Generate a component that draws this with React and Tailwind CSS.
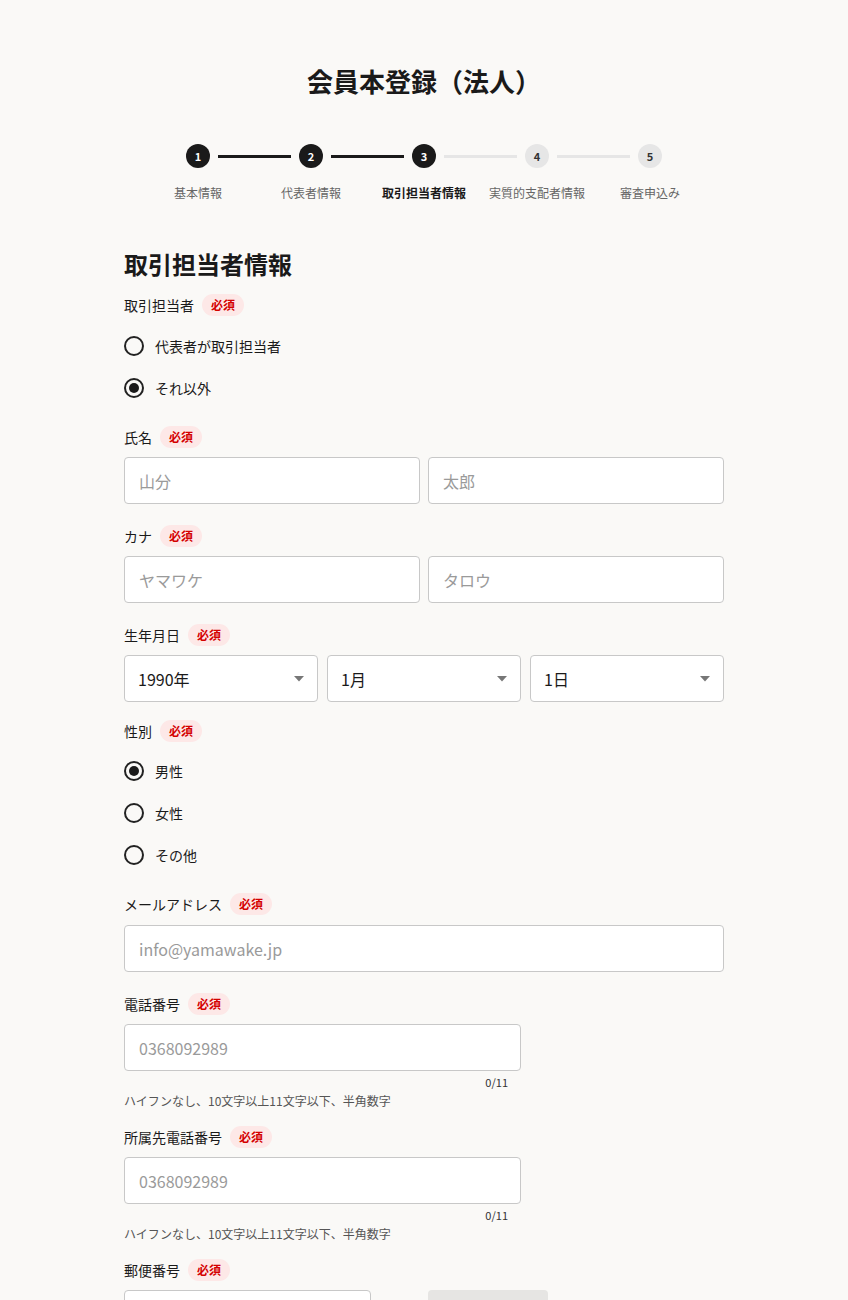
import React, { useState } from 'react';

const font = { fontFamily: '"Noto Sans CJK JP", "Noto Sans", sans-serif' };

const steps = ['基本情報', '代表者情報', '取引担当者情報', '実質的支配者情報', '審査申込み'];
const current = 3;

const Badge = () => (
  <span className="ml-2 inline-flex h-[22px] items-center rounded-full bg-[#fde8e7] px-[9px] text-[12px] font-bold text-[#d40000]">
    必須
  </span>
);

const Label = ({ children }) => (
  <div className="flex h-[22px] items-center text-[14px] text-[#1a1a1a]">
    {children}
    <Badge />
  </div>
);

const Radio = ({ checked, label, onClick }) => (
  <div onClick={onClick} className="flex h-[42px] cursor-pointer items-center">
    <span className="flex h-5 w-5 items-center justify-center rounded-full border-2 border-[#222]">
      {checked && <span className="h-[10px] w-[10px] rounded-full bg-[#1a1a1a]"></span>}
    </span>
    <span className="ml-[11px] text-[14px] text-[#1a1a1a]">{label}</span>
  </div>
);

const Input = ({ placeholder, className = '' }) => (
  <input
    type="text"
    placeholder={placeholder}
    className={`h-[47px] rounded-[4px] border border-[#c8c8c8] bg-white px-[14px] text-[16px] text-[#1a1a1a] placeholder:text-[#9a9a9a] focus:outline-none ${className}`}
  />
);

const Select = ({ value }) => (
  <div className="flex h-[47px] flex-1 items-center justify-between rounded-[4px] border border-[#c8c8c8] bg-white pl-[13px] pr-[13px] text-[16px] text-[#1a1a1a]">
    <span>{value}</span>
    <svg width="10" height="6" viewBox="0 0 10 6">
      <path d="M0 0 L10 0 L5 5.5 Z" fill="#777" />
    </svg>
  </div>
);

const App = () => {
  const [tanto, setTanto] = useState(1);
  const [gender, setGender] = useState(0);

  return (
    <div className="min-h-screen bg-[#faf9f7] pb-10" style={font}>
      {/* title */}
      <h1 className="pt-[63px] text-center text-[26px] font-bold leading-[36px] text-[#1a1a1a]">
        会員本登録（法人）
      </h1>

      {/* stepper */}
      <div className="mx-auto mt-[45px] flex w-[476px] items-center">
        {steps.map((s, i) => (
          <React.Fragment key={s}>
            <div
              className={`flex h-6 w-6 shrink-0 items-center justify-center rounded-full text-[11px] font-bold ${
                i + 1 <= current ? 'bg-[#1a1a1a] text-white' : 'bg-[#e6e6e6] text-[#333]'
              }`}
            >
              {i + 1}
            </div>
            {i < steps.length - 1 && (
              <div className={`mx-2 h-[3px] flex-1 ${i + 1 < current ? 'bg-[#1a1a1a]' : 'bg-[#e6e6e6]'}`}></div>
            )}
          </React.Fragment>
        ))}
      </div>
      <div className="mx-auto mt-4 grid w-[565px] grid-cols-5">
        {steps.map((s, i) => (
          <div
            key={s}
            className={`text-center text-[12px] leading-[18px] ${
              i + 1 === current ? 'font-bold text-[#1a1a1a]' : 'text-[#666]'
            }`}
          >
            {s}
          </div>
        ))}
      </div>

      {/* form */}
      <div className="mx-auto w-[600px]">
        <h2 className="mt-[46px] text-[24px] font-bold leading-[32px] text-[#1a1a1a]">取引担当者情報</h2>

        <div className="mt-[14px]">
          <Label>取引担当者</Label>
          <div className="mt-[9px]">
            <Radio checked={tanto === 0} label="代表者が取引担当者" onClick={() => setTanto(0)} />
            <Radio checked={tanto === 1} label="それ以外" onClick={() => setTanto(1)} />
          </div>
        </div>

        <div className="mt-[17px]">
          <Label>氏名</Label>
          <div className="mt-[9px] flex gap-2">
            <Input placeholder="山分" className="w-0 flex-1" />
            <Input placeholder="太郎" className="w-0 flex-1" />
          </div>
        </div>

        <div className="mt-[21px]">
          <Label>カナ</Label>
          <div className="mt-[9px] flex gap-2">
            <Input placeholder="ヤマワケ" className="w-0 flex-1" />
            <Input placeholder="タロウ" className="w-0 flex-1" />
          </div>
        </div>

        <div className="mt-[21px]">
          <Label>生年月日</Label>
          <div className="mt-[9px] flex gap-[9px]">
            <Select value="1990年" />
            <Select value="1月" />
            <Select value="1日" />
          </div>
        </div>

        <div className="mt-[18px]">
          <Label>性別</Label>
          <div className="mt-2">
            <Radio checked={gender === 0} label="男性" onClick={() => setGender(0)} />
            <Radio checked={gender === 1} label="女性" onClick={() => setGender(1)} />
            <Radio checked={gender === 2} label="その他" onClick={() => setGender(2)} />
          </div>
        </div>

        <div className="mt-[17px]">
          <Label>メールアドレス</Label>
          <div className="mt-[10px] flex">
            <Input placeholder="info@yamawake.jp" className="w-full" />
          </div>
        </div>

        <div className="mt-[21px]">
          <Label>電話番号</Label>
          <div className="mt-[9px] w-[397px]">
            <Input placeholder="0368092989" className="w-full" />
            <div className="mt-1 pr-[13px] text-right text-[11px] leading-[15px] text-[#333]">0/11</div>
          </div>
          <div className="mt-0.5 text-[12px] leading-[18px] text-[#555]">ハイフンなし、10文字以上11文字以下、半角数字</div>
        </div>

        <div className="mt-4">
          <Label>所属先電話番号</Label>
          <div className="mt-[9px] w-[397px]">
            <Input placeholder="0368092989" className="w-full" />
            <div className="mt-1 pr-[13px] text-right text-[11px] leading-[15px] text-[#333]">0/11</div>
          </div>
          <div className="mt-0.5 text-[12px] leading-[18px] text-[#555]">ハイフンなし、10文字以上11文字以下、半角数字</div>
        </div>

        <div className="mt-4">
          <Label>郵便番号</Label>
          <div className="mt-[9px] flex">
            <Input placeholder="" className="w-[247px]" />
            <button className="ml-[57px] h-[47px] w-[120px] rounded-[4px] bg-[#e6e5e3] text-[14px] text-[#999]">
              住所検索
            </button>
          </div>
        </div>
      </div>
    </div>
  );
};

export default App;
